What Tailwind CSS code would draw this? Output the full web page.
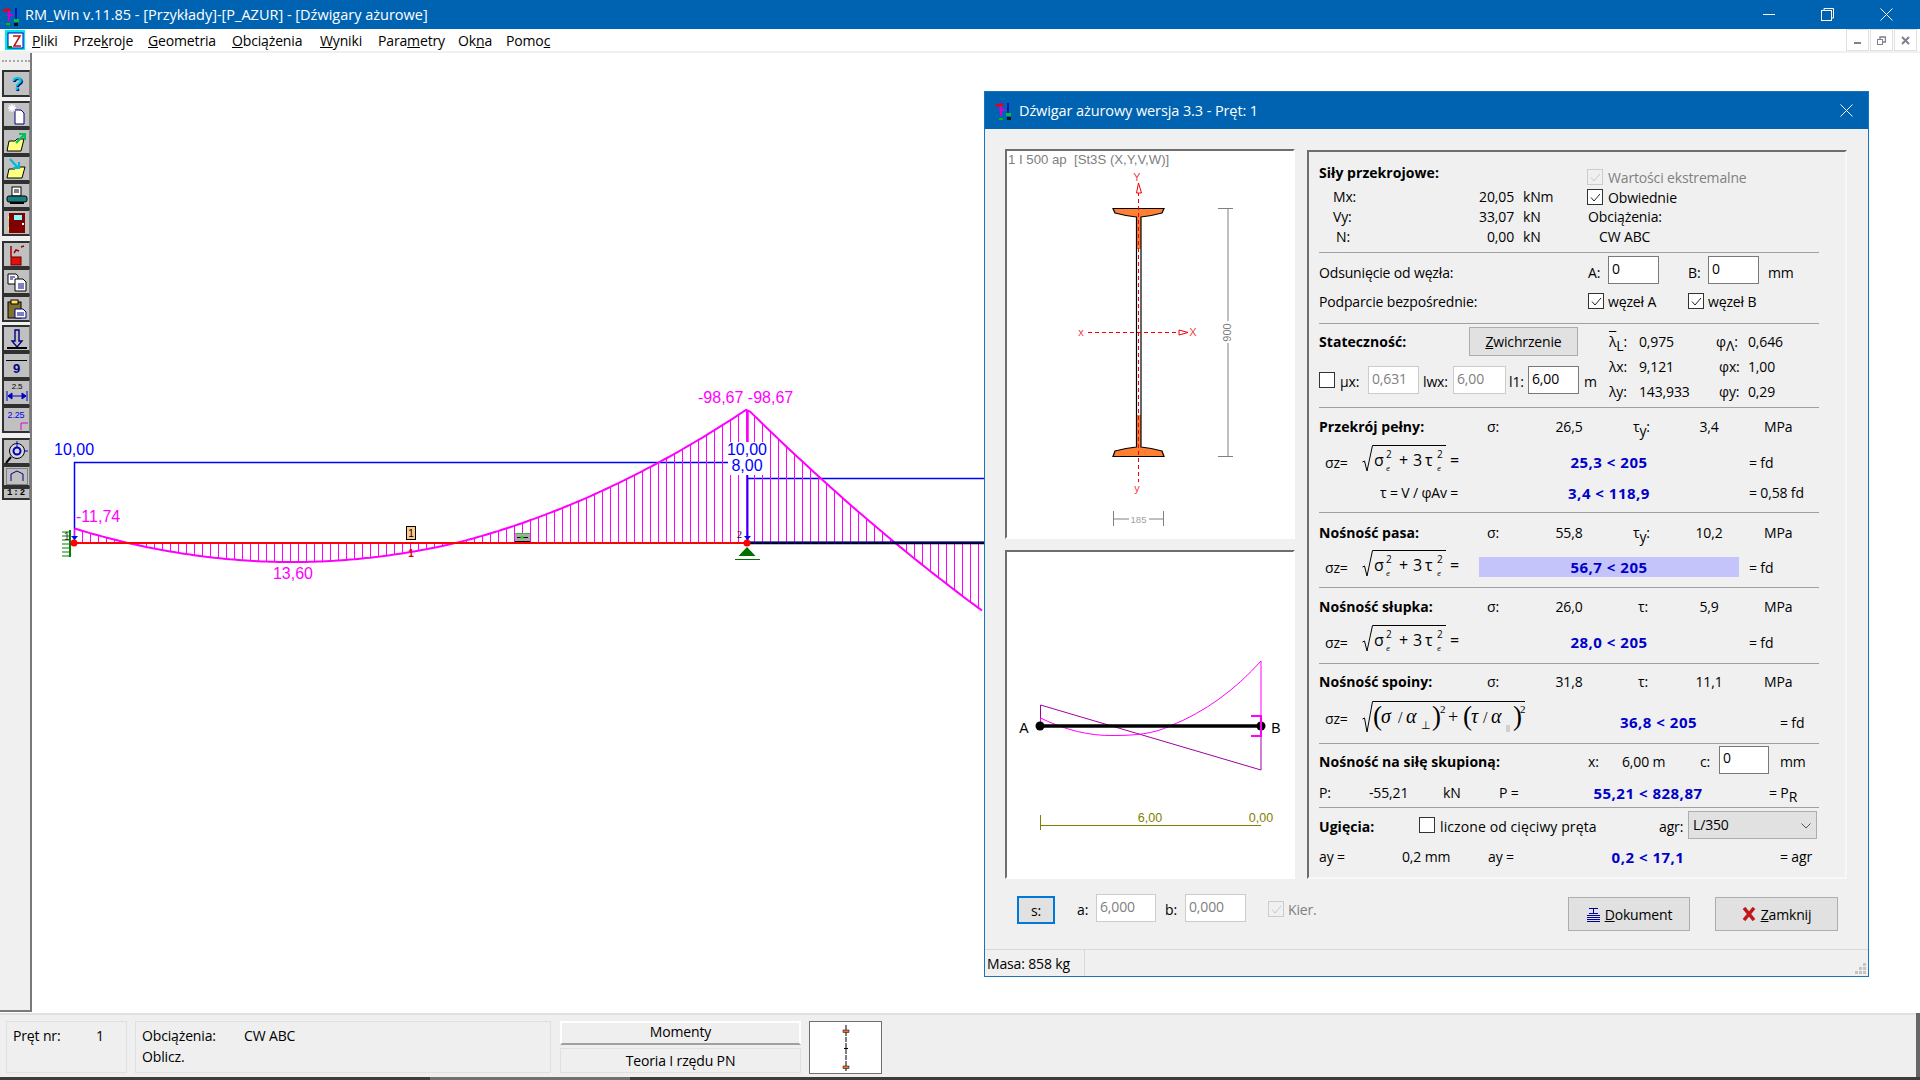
<!DOCTYPE html>
<html lang="pl">
<head>
    <meta charset="UTF-8">
    <title>RM_Win v.11.85</title>
    <script src="https://cdn.jsdelivr.net/npm/@tailwindcss/browser@4"></script>
</head>
<body class="w-[1920px] h-[1080px] overflow-hidden flex flex-col bg-white text-black text-[14px] tracking-[-0.15px] font-['Open_Sans',sans-serif]">

    <!-- title bar -->
    <div class="h-[29px] bg-[#0063b1] text-white flex items-center">
        <svg class="ml-[1px] w-[22px] h-[24px]" viewBox="0 0 22 24" fill="none"><path d="M0 7l8-2 2 3-6 1z" fill="#e00020"/><path d="M8 8v10M6 12h6" stroke="#d000d0" stroke-width="2"/><path d="M15 5v13" stroke="#0000c0" stroke-width="1.5"/><rect x="13" y="16" width="5" height="3" fill="#00c040"/><rect x="13" y="20" width="4" height="3" fill="#111"/><path d="M5 21h4" stroke="#00c000" stroke-width="2"/></svg>
        <span class="ml-[2px] text-[14.5px] tracking-normal">RM_Win v.11.85 - [Przykłady]-[P_AZUR] - [Dźwigary ażurowe]</span>
        <div class="ml-auto flex items-center">
            <div class="w-[12px] h-px bg-white"></div>
            <svg class="ml-[46px] w-[13px] h-[13px]" viewBox="0 0 13 13" fill="none" stroke="white"><rect x="0.5" y="2.5" width="10" height="10"/><path d="M3 2.5V0.5H12.5V10H10.5"/></svg>
            <svg class="ml-[46px] mr-[27px] w-[13px] h-[13px]" viewBox="0 0 13 13" stroke="white"><path d="M0.5 0.5l12 12M12.5 0.5l-12 12"/></svg>
        </div>
    </div>

    <!-- menu -->
    <div class="h-[24px] flex items-center border-b-2 border-[#f0f0f0]">
        <svg class="ml-[5px] w-[20px] h-[20px]" viewBox="0 0 20 20" fill="none"><rect width="20" height="20" fill="#00e8e8"/><rect x="3" y="3" width="15" height="15" fill="white" stroke="#0000c0"/><path d="M8 6h7l-6 10h7" stroke="#c01010" stroke-width="1.5"/><path d="M3 17h4" stroke="#008000" stroke-width="2"/></svg>
        <div class="ml-[7px] pt-px flex">
            <span class="w-[41px]"><u>P</u>liki</span>
            <span class="w-[75px]">Prze<u>k</u>roje</span>
            <span class="w-[84px]"><u>G</u>eometria</span>
            <span class="w-[88px]"><u>O</u>bciążenia</span>
            <span class="w-[58px]"><u>W</u>yniki</span>
            <span class="w-[80px]">Para<u>m</u>etry</span>
            <span class="w-[48px]">Ok<u>n</u>a</span>
            <span>Pomo<u>c</u></span>
        </div>
        <div class="ml-auto mr-[3px] flex gap-px">
            <div class="w-[23px] h-[22px] border border-[#e0e0e0] flex items-end justify-center pb-[6px]"><div class="w-[7px] h-[2px] bg-[#80808f]"></div></div>
            <div class="w-[23px] h-[22px] border border-[#e0e0e0] flex items-center justify-center"><svg class="w-[9px] h-[9px]" viewBox="0 0 9 9" fill="none" stroke="#80808f"><rect x="0.5" y="3.5" width="5" height="5"/><path d="M3 3V1h5.5v5H6" stroke-width="1.4"/></svg></div>
            <div class="w-[23px] h-[22px] border border-[#e0e0e0] flex items-center justify-center"><svg class="w-[9px] h-[9px]" viewBox="0 0 9 9" stroke="#80808f" stroke-width="2"><path d="M1 1l7 7M8 1l-7 7"/></svg></div>
        </div>
    </div>

    <!-- workspace -->
    <div class="h-[960px] flex">
        <!-- left toolbar -->
        <div class="w-[32px] h-[959px] bg-[#f0f0f0] border-r-2 border-b-2 border-[#7a7a7a] flex flex-col pl-[2px]">
            <div class="mt-[7px] mb-[8px] w-[28px] h-[2px] border-t-2 border-dotted border-[#a8a8a8]"></div>
            <div class="w-[28px] h-[27px] border-2 border-r border-[#303030] border-r-[#808080] bg-[#c0c0c0] flex items-center justify-center"><svg class="w-[20px] h-[20px]" viewBox="0 0 20 20"><text x="11" y="17" text-anchor="middle" font-family="Liberation Sans" font-weight="700" font-size="19" fill="#000080">?</text><text x="10" y="16" text-anchor="middle" font-family="Liberation Sans" font-weight="700" font-size="19" fill="#00c8d8">?</text></svg></div>
            <div class="mt-[4px] w-[28px] h-[27px] border-2 border-r border-[#303030] border-r-[#808080] bg-[#c0c0c0] flex items-center justify-center"><svg class="w-[22px] h-[22px]" viewBox="0 0 22 22"><path d="M9 6h6l3 3v11H9z" fill="white" stroke="#000080"/><path d="M2 4h8M6 0v8M3 1l6 6M9 1L3 7" stroke="white" stroke-width="1.3"/></svg></div>
            <div class="w-[28px] h-[27px] border-2 border-r border-[#303030] border-r-[#808080] bg-[#c0c0c0] flex items-center justify-center"><svg class="w-[22px] h-[22px]" viewBox="0 0 22 22"><path d="M3 10h6l2-2h7l-3 12H1z" fill="#ffff80" stroke="#000"/><path d="M10 12l9-9M13 3h6v6" stroke="#00c060" stroke-width="2.2" fill="none"/></svg></div>
            <div class="w-[28px] h-[27px] border-2 border-r border-[#303030] border-r-[#808080] bg-[#c0c0c0] flex items-center justify-center"><svg class="w-[22px] h-[22px]" viewBox="0 0 22 22"><path d="M3 11h6l2-2h8l-3 11H1z" fill="#ffff80" stroke="#000"/><path d="M4 1l8 9M7 10h6V4" stroke="#00b8d8" stroke-width="2.2" fill="none"/></svg></div>
            <div class="w-[28px] h-[27px] border-2 border-r border-[#303030] border-r-[#808080] bg-[#c0c0c0] flex items-center justify-center"><svg class="w-[22px] h-[22px]" viewBox="0 0 22 22"><rect x="6" y="2" width="9" height="9" fill="white" stroke="#000"/><path d="M8 5h5M8 7h5" stroke="#000"/><rect x="1" y="11" width="20" height="6" rx="2" fill="#1a8080" stroke="#000"/><rect x="4" y="17" width="14" height="2" fill="#000"/></svg></div>
            <div class="w-[28px] h-[27px] border-2 border-r border-[#303030] border-r-[#808080] bg-[#c0c0c0] flex items-center justify-center"><svg class="w-[20px] h-[22px]" viewBox="0 0 20 22"><rect x="2" y="1" width="16" height="20" fill="#800000"/><rect x="7" y="3" width="8" height="5" fill="#80ffff"/><rect x="1" y="4" width="1" height="3" fill="#ffff00"/><rect x="1" y="15" width="1" height="3" fill="#ffff00"/><rect x="15" y="11" width="2" height="2" fill="white"/></svg></div>
            <div class="mt-[5px] w-[28px] h-[27px] border-2 border-r border-[#303030] border-r-[#808080] bg-[#c0c0c0] flex items-center justify-center"><svg class="w-[22px] h-[22px]" viewBox="0 0 22 22"><rect x="5" y="13" width="10" height="8" fill="#e01010" stroke="#600"/><path d="M5 2v11M8 9l2-3 3 1M15 3l3-1" stroke="#a00000" stroke-width="1.5" fill="none"/></svg></div>
            <div class="w-[28px] h-[27px] border-2 border-r border-[#303030] border-r-[#808080] bg-[#c0c0c0] flex items-center justify-center"><svg class="w-[20px] h-[20px]" viewBox="0 0 20 20" fill="white" stroke="#000"><path d="M1 2h8l2 2v8H1z"/><path d="M8 7h8l3 3v9H8z"/><path d="M3 5h5M3 7h3M11 12h6M11 14h6M11 16h6" stroke="#000080"/></svg></div>
            <div class="w-[28px] h-[27px] border-2 border-r border-[#303030] border-r-[#808080] bg-[#c0c0c0] flex items-center justify-center"><svg class="w-[22px] h-[22px]" viewBox="0 0 22 22"><rect x="2" y="4" width="13" height="16" fill="#807030" stroke="#000"/><rect x="5" y="2" width="7" height="4" fill="#ffe060" stroke="#000"/><path d="M9 11h8l3 3v6H9z" fill="white" stroke="#000080"/><path d="M11 15h7M11 17h7" stroke="#000080"/></svg></div>
            <div class="mt-[3px] w-[28px] h-[27px] border-2 border-r border-[#303030] border-r-[#808080] bg-[#c0c0c0] flex items-center justify-center"><svg class="w-[22px] h-[22px]" viewBox="0 0 22 22" fill="none"><path d="M9 2h4v11h3l-5 6-5-6h3z" stroke="#000080" stroke-width="1.4"/><path d="M1 20h20" stroke="#000" stroke-width="2"/></svg></div>
            <div class="w-[28px] h-[27px] border-2 border-r border-[#303030] border-r-[#808080] bg-[#c0c0c0] flex flex-col items-center justify-start"><div class="mt-[6px] w-[21px] h-[2px] bg-black"></div><span class="text-[13px] leading-[16px] font-bold text-[#000080] font-['Liberation_Sans',sans-serif]">9</span></div>
            <div class="w-[28px] h-[27px] border-2 border-r border-[#303030] border-r-[#808080] bg-[#c0c0c0] flex items-center justify-center"><svg class="w-[24px] h-[23px]" viewBox="0 0 24 23"><text x="12" y="8" text-anchor="middle" font-family="Liberation Sans" font-size="8" fill="#000">2.5</text><path d="M2 10v10M22 10v10M3 15h18M3 15l4-3v6zM21 15l-4-3v6z" stroke="#0000c0" fill="#0000c0"/></svg></div>
            <div class="w-[28px] h-[27px] border-2 border-r border-[#303030] border-r-[#808080] bg-[#c0c0c0] flex items-center justify-center"><svg class="w-[24px] h-[23px]" viewBox="0 0 24 23" fill="none"><text x="11" y="10" text-anchor="middle" font-family="Liberation Sans" font-size="9" fill="#0000f0">2.25</text><path d="M23 15h-7v7" stroke="#e000e0"/></svg></div>
            <div class="mt-[5px] w-[28px] h-[27px] border-2 border-r border-[#303030] border-r-[#808080] bg-[#c0c0c0] flex items-center justify-center"><svg class="w-[24px] h-[24px]" viewBox="0 0 24 24" fill="none"><circle cx="12" cy="11" r="7.5" fill="#d8d8d8" stroke="#000"/><circle cx="12" cy="11" r="3.5" stroke="#0000c0" stroke-width="2"/><path d="M12 1v6M19 11h4" stroke="#0000c0"/><path d="M6 17l-5 6" stroke="#000" stroke-width="2"/></svg></div>
            <div class="w-[28px] h-[22px] border-2 border-r border-[#303030] border-r-[#808080] bg-[#c0c0c0] flex items-center justify-center"><svg class="w-[22px] h-[17px]" viewBox="0 0 22 17" fill="none"><rect x="0.5" y="0.5" width="21" height="16" stroke="#808080"/><path d="M5 13V6l6-3 6 3v7" stroke="#000080"/></svg></div>
            <div class="w-[28px] h-[13px] border-2 border-r border-[#303030] border-r-[#808080] bg-[#c0c0c0] flex items-center justify-center text-[9px] tracking-[1px] leading-none font-bold font-['Liberation_Mono',monospace]">1:2</div>
        </div>

        <!-- drawing canvas with the floating dialog on top -->
        <div class="relative flex-1">
            <svg id="chart" class="absolute inset-0" width="1888" height="960" viewBox="32 53 1888 960" fill="none" font-family="Liberation Sans" font-size="16" letter-spacing="0">
                <path d="M74.5 542V462.5H730" stroke="#0000ff" stroke-width="1.5"/>
                <path d="M747.5 542V478.5H984" stroke="#0000ff" stroke-width="1.5"/>
                <g id="hatch" stroke="#ff00ff" stroke-width="1"></g>
                <path d="M747.5 410V446" stroke="#ff00ff" stroke-width="2.5"/>
                <path id="curve" stroke="#ff00ff" stroke-width="2"/>
                <path d="M74 543H747" stroke="#ff0000" stroke-width="2"/>
                <path d="M747 543H984" stroke="#000000" stroke-width="2.5"/>
                <path d="M747 542H984" stroke="#0000e0" stroke-width="1.2"/>
                <rect x="728" y="442" width="39" height="33" fill="white"/>
                <path d="M747.5 475V542" stroke="#0000ff" stroke-width="1.5"/>
                <text x="54" y="455" fill="#0000ff">10,00</text>
                <text x="76" y="522" fill="#ff00ff">-11,74</text>
                <text x="293" y="579" fill="#ff00ff" text-anchor="middle">13,60</text>
                <text x="698" y="403" fill="#ff00ff">-98,67 -98,67</text>
                <text x="747" y="455" fill="#0000ff" text-anchor="middle">10,00</text>
                <text x="747" y="471" fill="#0000ff" text-anchor="middle">8,00</text>
                <!-- supports and node marks -->
                <path d="M70 530V557" stroke="#008000" stroke-width="2"/>
                <path d="M62 532h8M62 536h8M62 540h8M62 544h8M62 548h8M62 552h8M62 556h8" stroke="#008000"/>
                <text x="64" y="540" fill="#303030" font-size="10">1</text>
                <circle cx="74" cy="543" r="3.5" fill="#ff0000"/>
                <path d="M71 536h7l-3.5 4z" fill="#0000ff"/>
                <path d="M744 536h7l-3.5 4z" fill="#0000ff"/>
                <text x="737" y="538" fill="#000" font-size="10" font-family="Liberation Serif">2</text>
                <circle cx="747" cy="543" r="3.5" fill="#ff0000"/>
                <path d="M747 547l8.5 9h-17z" fill="#007000"/>
                <path d="M735 559.5h25" stroke="#007000"/>
                <rect x="406.5" y="526.5" width="9" height="13" fill="#ffc98c" stroke="#000"/>
                <text x="411" y="537" fill="#000" font-size="10" text-anchor="middle">1</text>
                <text x="411" y="557" fill="#e00000" font-size="10" font-weight="700" text-anchor="middle">1</text>
                <rect x="515" y="534" width="15" height="8" fill="#a8a8a8"/>
                <path d="M515 533.5h15" stroke="#30c030"/>
                <path d="M515 541.5h15M517 537.5h11" stroke="#000"/>
                <rect x="520.5" y="536" width="3" height="3" fill="#20e020"/>
            </svg>

            <!-- dialog -->
            <div class="absolute left-[952px] top-[38px] w-[885px] h-[886px] border border-[#1a74bb] bg-[#f0f0f0] flex flex-col">
                <div class="h-[37px] bg-[#0063b1] text-white flex items-center">
                    <svg class="ml-[8px] w-[22px] h-[22px]" viewBox="0 0 22 22" fill="none"><path d="M1 5l8-2 2 3-6 1z" fill="#e00020"/><path d="M8 6v10M6 10h6" stroke="#d000d0" stroke-width="2"/><path d="M15 3v12" stroke="#0000c0" stroke-width="1.5"/><rect x="13" y="13" width="5" height="3" fill="#00c040"/><rect x="14" y="17" width="4" height="3" fill="#111"/><path d="M6 19h4" stroke="#00c000" stroke-width="2"/></svg>
                    <span class="ml-[4px] text-[14.5px] tracking-[-0.1px]">Dźwigar ażurowy wersja 3.3 - Pręt: 1</span>
                    <svg class="ml-auto mr-[15px] w-[13px] h-[13px]" viewBox="0 0 13 13" stroke="white"><path d="M0.5 0.5l12 12M12.5 0.5l-12 12"/></svg>
                </div>

                <div class="h-[750px] flex pl-[20px] pt-[20px]">
                    <!-- preview panels -->
                    <div class="w-[290px] flex flex-col gap-[11px]">
                        <div class="h-[390px] bg-white border-2 border-[#6e6e6e] border-r-white border-b-white">
                            <svg width="286" height="386" viewBox="2 2 286 386" fill="none" font-family="Liberation Sans" letter-spacing="0">
                                <text x="3" y="15" font-size="13.2" fill="#808080" xml:space="preserve">1 I 500 ap  [St3S (X,Y,V,W)]</text>
                                <path d="M108 59.5H159L157 64Q146 67 136 68V298Q146 299 157 302L159 307.5H108L110 302Q121 299 131.5 298V68Q121 67 110 64Z" fill="#ff7f33"/>
                                <rect x="132" y="100" width="4" height="166" fill="white"/>
                                <path d="M108 59.5H159L157 64Q146 67 136 68V298Q146 299 157 302L159 307.5H108L110 302Q121 299 131.5 298V68Q121 67 110 64Z" stroke="#000" stroke-width="1.2"/>
                                <path d="M133.5 36V333M83 183.5H183" stroke="#f00000" stroke-dasharray="4 3"/>
                                <path d="M133.5 34l-2 10h5z" stroke="#f00000" fill="white"/>
                                <path d="M174 181v5l9-2.5z" stroke="#f00000" fill="white"/>
                                <text x="132" y="32" font-size="11" fill="#f04040" text-anchor="middle">Y</text>
                                <text x="132" y="343" font-size="11" fill="#f04040" text-anchor="middle">y</text>
                                <text x="76" y="187" font-size="11" fill="#f04040" text-anchor="middle">x</text>
                                <text x="188" y="187" font-size="11" fill="#f04040" text-anchor="middle">X</text>
                                <path d="M213 59.5H228M223 59.5V307.5M213 307.5H228" stroke="#808080"/>
                                <rect x="216" y="172" width="12" height="22" fill="white"/>
                                <text transform="translate(226 183.5) rotate(-90)" font-size="11" fill="#808080" text-anchor="middle">900</text>
                                <path d="M108.5 362V377M158.5 362V377M108.5 370H124M144 370H158.5" stroke="#808080"/>
                                <text x="133.5" y="374" font-size="9.5" fill="#a0a0a0" text-anchor="middle">185</text>
                            </svg>
                        </div>
                        <div class="h-[329px] bg-white border-2 border-[#6e6e6e] border-r-white border-b-white">
                            <svg width="286" height="325" viewBox="2 2 286 325" fill="none" font-family="Liberation Sans" letter-spacing="0">
                                <path d="M35.5 176V155L256 220V176" stroke="#a000a0"/>
                                <path d="M35.5 176V168C60 180 85 186 108 185.5C130 185.5 148 184 165 176C200 162 230 140 256 111V176" stroke="#ff00ff"/>
                                <path d="M35 176H256" stroke="#000" stroke-width="3.5"/>
                                <circle cx="35" cy="176" r="4.5" fill="#000"/>
                                <circle cx="256" cy="176" r="4.5" fill="#000"/>
                                <path d="M246 166H256V186H246" stroke="#ff00ff" stroke-width="2"/>
                                <text x="19" y="183" font-size="14" fill="#000" text-anchor="middle">A</text>
                                <text x="271" y="183" font-size="14" fill="#000" text-anchor="middle">B</text>
                                <path d="M35.5 265V280M35 275.5H256" stroke="#808000"/>
                                <text x="145" y="272" font-size="12.5" fill="#808000" text-anchor="middle">6,00</text>
                                <text x="256" y="272" font-size="12.5" fill="#808000" text-anchor="middle">0,00</text>
                            </svg>
                        </div>
                    </div>

                    <!-- results group -->
                    <div class="ml-[12px] mt-px w-[540px] h-[729px] border-2 border-[#6e6e6e] border-r-[#f8f8f8] border-b-[#f8f8f8] pl-[10px]">
                        <div class="w-[500px]">
                            <!-- section forces -->
                            <div class="h-[101px] border-b border-[#a0a0a0] flex">
                                <div class="w-[268px] pt-[11px]">
                                    <div class="h-5 leading-5 font-bold tracking-[0.05px]">Siły przekrojowe:</div>
                                    <div class="mt-[4px] h-5 leading-5 flex"><span class="w-[120px] pl-[14px]">Mx:</span><span class="w-[75px] text-right">20,05</span><span class="ml-[9px]">kNm</span></div>
                                    <div class="h-5 leading-5 flex"><span class="w-[120px] pl-[14px]">Vy:</span><span class="w-[75px] text-right">33,07</span><span class="ml-[9px]">kN</span></div>
                                    <div class="h-5 leading-5 flex"><span class="w-[120px] pl-[17px]">N:</span><span class="w-[75px] text-right">0,00</span><span class="ml-[9px]">kN</span></div>
                                </div>
                                <div class="pt-[15px]">
                                    <div class="h-5 flex items-center text-[#808080]"><div class="w-4 h-4 border border-[#cccccc] bg-[#f0f0f0] flex items-center justify-center"><svg class="w-[11px] h-[9px]" viewBox="0 0 11 9" fill="none" stroke="#c8c8c8"><path d="M1 4.5L4 8L10 1"/></svg></div><span class="ml-[5px]">Wartości ekstremalne</span></div>
                                    <div class="h-5 flex items-center"><div class="w-4 h-4 border border-[#333333] bg-white flex items-center justify-center"><svg class="w-[11px] h-[9px]" viewBox="0 0 11 9" fill="none" stroke="#222"><path d="M1 4.5L4 8L10 1"/></svg></div><span class="ml-[5px]">Obwiednie</span></div>
                                    <div class="h-5 leading-5 pl-px">Obciążenia:</div>
                                    <div class="h-5 leading-5 pl-[12px]">CW ABC</div>
                                </div>
                            </div>
                            <!-- section offsets -->
                            <div class="h-[71px] border-b border-[#a0a0a0] pt-[3px]">
                                <div class="h-7 flex">
                                    <span class="w-[269px] pt-[6px]">Odsunięcie od węzła:</span>
                                    <span class="w-[20px] pt-[6px]">A:</span>
                                    <input value="0" class="w-[51px] h-7 border border-[#7a7a7a] bg-white pl-[3px] pb-[4px]">
                                    <span class="ml-[29px] w-[20px] pt-[6px]">B:</span>
                                    <input value="0" class="w-[51px] h-7 border border-[#7a7a7a] bg-white pl-[3px] pb-[4px]">
                                    <span class="ml-[9px] pt-[6px]">mm</span>
                                </div>
                                <div class="mt-[7px] h-5 flex items-center">
                                    <span class="w-[269px]">Podparcie bezpośrednie:</span>
                                    <div class="w-[100px] flex items-center"><div class="w-4 h-4 border border-[#333333] bg-white flex items-center justify-center"><svg class="w-[11px] h-[9px]" viewBox="0 0 11 9" fill="none" stroke="#222"><path d="M1 4.5L4 8L10 1"/></svg></div><span class="ml-[4px]">węzeł A</span></div>
                                    <div class="flex items-center"><div class="w-4 h-4 border border-[#333333] bg-white flex items-center justify-center"><svg class="w-[11px] h-[9px]" viewBox="0 0 11 9" fill="none" stroke="#222"><path d="M1 4.5L4 8L10 1"/></svg></div><span class="ml-[4px]">węzeł B</span></div>
                                </div>
                            </div>
                            <!-- section stability -->
                            <div class="h-[84px] border-b border-[#a0a0a0] flex">
                                <div class="w-[290px]">
                                    <div class="mt-[3px] h-[29px] flex items-center">
                                        <span class="w-[150px] font-bold tracking-[0.05px]">Stateczność:</span>
                                        <div class="w-[109px] h-[29px] border border-[#adadad] bg-[#e1e1e1] flex items-center justify-center"><span><u>Z</u>wichrzenie</span></div>
                                    </div>
                                    <div class="mt-[10px] h-7 flex items-center">
                                        <div class="w-4 h-4 border border-[#333333] bg-white"></div>
                                        <span class="ml-[5px] w-[28px] pt-[3px]">µx:</span>
                                        <input value="0,631" disabled class="w-[51px] h-7 border border-[#cccccc] bg-white pl-[3px] pb-[4px] text-[#808080]">
                                        <span class="ml-[4px] w-[30px] pt-[3px]">lwx:</span>
                                        <input value="6,00" disabled class="w-[53px] h-7 border border-[#cccccc] bg-white pl-[3px] pb-[4px] text-[#808080]">
                                        <span class="ml-[3px] w-[19px] pt-[3px]">l1:</span>
                                        <input value="6,00" class="w-[51px] h-7 border border-[#7a7a7a] bg-white pl-[3px] pb-[4px]">
                                        <span class="ml-[5px] pt-[3px]">m</span>
                                    </div>
                                </div>
                                <div class="pt-[8px]">
                                    <div class="h-5 leading-5 flex"><span class="w-[30px]"><span class="overline">λ</span><span class="relative top-[4px]">L</span>:</span><span class="w-[77px]">0,975</span><span class="w-[32px]">φ<span class="relative top-[4px]">Λ</span>:</span><span>0,646</span></div>
                                    <div class="mt-[5px] h-5 leading-5 flex"><span class="w-[30px]">λx:</span><span class="w-[77px]">9,121</span><span class="w-[32px] pl-[3px]">φx:</span><span>1,00</span></div>
                                    <div class="mt-[5px] h-5 leading-5 flex"><span class="w-[30px]">λy:</span><span class="w-[77px]">143,933</span><span class="w-[32px] pl-[3px]">φy:</span><span>0,29</span></div>
                                </div>
                            </div>
                            <!-- section full cross-section -->
                            <div class="h-[105px] border-b border-[#a0a0a0] pt-[9px]">
                                <div class="h-5 leading-5 flex"><span class="w-[168px] font-bold tracking-[0.05px]">Przekrój pełny:</span><span class="w-[60px]">σ:</span><span class="w-[44px] text-center">26,5</span><span class="w-[42px]"></span><span class="w-[40px]">τ<span class="relative top-[4px]">y</span>:</span><span class="w-[72px] text-center">3,4</span><span class="w-[19px]"></span><span>MPa</span></div>
                                <div class="mt-[8px] h-[34px] flex items-center">
                                    <span class="w-[43px] pl-[6px]">σz=</span>
                                    <svg width="117" height="34" viewBox="0 0 117 34" fill="none" font-family="Open Sans" font-size="16" letter-spacing="0">
                                        <path d="M0.5 17L2.5 16L5 26L10.5 0.5H84" stroke="#000"/>
                                        <text x="12" y="21" fill="#000">σ</text><text x="24" y="13" fill="#000" font-size="10">2</text><text x="24" y="26" fill="#000" font-size="8" font-style="italic">e</text>
                                        <text x="37" y="21" fill="#000">+</text><text x="51" y="21" fill="#000">3</text><text x="63" y="21" fill="#000">τ</text>
                                        <text x="75" y="13" fill="#000" font-size="10">2</text><text x="75" y="26" fill="#000" font-size="8" font-style="italic">e</text><text x="88" y="21" fill="#000">=</text>
                                    </svg>
                                    <span class="w-[260px] h-5 leading-5 text-center text-[15px] tracking-[0.5px] font-bold text-[#0000c8]">25,3 &lt; 205</span>
                                    <span class="ml-[10px]">= fd</span>
                                </div>
                                <div class="mt-[4px] h-5 leading-5 flex">
                                    <span class="w-[160px] pl-[61px]">τ = V / φAv =</span>
                                    <span class="w-[260px] text-center text-[15px] tracking-[0.5px] font-bold text-[#0000c8]">3,4 &lt; 118,9</span>
                                    <span class="ml-[10px]">= 0,58 fd</span>
                                </div>
                            </div>
                            <!-- section flange -->
                            <div class="h-[75px] border-b border-[#a0a0a0] pt-[10px]">
                                <div class="h-5 leading-5 flex"><span class="w-[168px] font-bold tracking-[0.05px]">Nośność pasa:</span><span class="w-[60px]">σ:</span><span class="w-[44px] text-center">55,8</span><span class="w-[42px]"></span><span class="w-[40px]">τ<span class="relative top-[4px]">y</span>:</span><span class="w-[72px] text-center">10,2</span><span class="w-[19px]"></span><span>MPa</span></div>
                                <div class="mt-[7px] h-[34px] flex items-center">
                                    <span class="w-[43px] pl-[6px]">σz=</span>
                                    <svg width="117" height="34" viewBox="0 0 117 34" fill="none" font-family="Open Sans" font-size="16" letter-spacing="0">
                                        <path d="M0.5 17L2.5 16L5 26L10.5 0.5H84" stroke="#000"/>
                                        <text x="12" y="21" fill="#000">σ</text><text x="24" y="13" fill="#000" font-size="10">2</text><text x="24" y="26" fill="#000" font-size="8" font-style="italic">e</text>
                                        <text x="37" y="21" fill="#000">+</text><text x="51" y="21" fill="#000">3</text><text x="63" y="21" fill="#000">τ</text>
                                        <text x="75" y="13" fill="#000" font-size="10">2</text><text x="75" y="26" fill="#000" font-size="8" font-style="italic">e</text><text x="88" y="21" fill="#000">=</text>
                                    </svg>
                                    <span class="w-[260px] h-5 leading-5 text-center text-[15px] tracking-[0.5px] font-bold text-[#0000c8] bg-[#c4c4fa]">56,7 &lt; 205</span>
                                    <span class="ml-[10px]">= fd</span>
                                </div>
                            </div>
                            <!-- section post -->
                            <div class="h-[76px] border-b border-[#a0a0a0] pt-[9px]">
                                <div class="h-5 leading-5 flex"><span class="w-[168px] font-bold tracking-[0.05px]">Nośność słupka:</span><span class="w-[60px]">σ:</span><span class="w-[44px] text-center">26,0</span><span class="w-[42px]"></span><span class="w-[40px] pl-[5px]">τ:</span><span class="w-[72px] text-center">5,9</span><span class="w-[19px]"></span><span>MPa</span></div>
                                <div class="mt-[8px] h-[34px] flex items-center">
                                    <span class="w-[43px] pl-[6px]">σz=</span>
                                    <svg width="117" height="34" viewBox="0 0 117 34" fill="none" font-family="Open Sans" font-size="16" letter-spacing="0">
                                        <path d="M0.5 17L2.5 16L5 26L10.5 0.5H84" stroke="#000"/>
                                        <text x="12" y="21" fill="#000">σ</text><text x="24" y="13" fill="#000" font-size="10">2</text><text x="24" y="26" fill="#000" font-size="8" font-style="italic">e</text>
                                        <text x="37" y="21" fill="#000">+</text><text x="51" y="21" fill="#000">3</text><text x="63" y="21" fill="#000">τ</text>
                                        <text x="75" y="13" fill="#000" font-size="10">2</text><text x="75" y="26" fill="#000" font-size="8" font-style="italic">e</text><text x="88" y="21" fill="#000">=</text>
                                    </svg>
                                    <span class="w-[260px] h-5 leading-5 text-center text-[15px] tracking-[0.5px] font-bold text-[#0000c8]">28,0 &lt; 205</span>
                                    <span class="ml-[10px]">= fd</span>
                                </div>
                            </div>
                            <!-- section weld -->
                            <div class="h-[80px] border-b border-[#a0a0a0] pt-[8px]">
                                <div class="h-5 leading-5 flex"><span class="w-[168px] font-bold tracking-[0.05px]">Nośność spoiny:</span><span class="w-[60px]">σ:</span><span class="w-[44px] text-center">31,8</span><span class="w-[42px]"></span><span class="w-[40px] pl-[5px]">τ:</span><span class="w-[72px] text-center">11,1</span><span class="w-[19px]"></span><span>MPa</span></div>
                                <div class="mt-[9px] h-[34px] flex items-center">
                                    <span class="w-[43px] pl-[6px]">σz=</span>
                                    <svg width="170" height="34" viewBox="0 0 170 34" fill="none" font-family="Liberation Serif" font-size="20" letter-spacing="0">
                                        <path d="M0.5 18L2.5 17L5 31L10.5 0.5H163" stroke="#000"/>
                                        <text x="11" y="24" fill="#000" font-size="27">(</text>
                                        <text x="19" y="22" fill="#000" font-style="italic">σ</text><text x="36" y="22" fill="#000" font-size="16">/</text><text x="44" y="22" fill="#000" font-style="italic">α</text>
                                        <text x="59" y="28" fill="#000" font-size="11">⊥</text><text x="70" y="24" fill="#000" font-size="27">)</text><text x="78" y="12" fill="#000" font-size="11">2</text>
                                        <text x="86" y="22" fill="#000" font-size="18">+</text><text x="101" y="24" fill="#000" font-size="27">(</text>
                                        <text x="109" y="22" fill="#000" font-style="italic">τ</text><text x="121" y="22" fill="#000" font-size="16">/</text><text x="129" y="22" fill="#000" font-style="italic">α</text>
                                        <path d="M145 24v7M147 24v7" stroke="#b0b0b0"/><text x="151" y="24" fill="#000" font-size="27">)</text><text x="158" y="12" fill="#000" font-size="11">2</text>
                                    </svg>
                                    <span class="ml-[39px] w-[175px] pt-[8px] text-center text-[15px] tracking-[0.5px] font-bold text-[#0000c8]">36,8 &lt; 205</span>
                                    <span class="ml-[34px] pt-[8px]">= fd</span>
                                </div>
                            </div>
                            <!-- section point load -->
                            <div class="h-[64px] border-b border-[#a0a0a0] pt-[2px]">
                                <div class="h-7 flex items-center">
                                    <span class="w-[269px] pt-[3px] font-bold tracking-[0.05px]">Nośność na siłę skupioną:</span>
                                    <span class="w-[34px] pt-[3px]">x:</span>
                                    <span class="w-[78px] pt-[3px]">6,00 m</span>
                                    <span class="w-[19px] pt-[3px]">c:</span>
                                    <input value="0" class="w-[50px] h-7 border border-[#7a7a7a] bg-white pl-[3px] pb-[5px]">
                                    <span class="ml-[11px] pt-[3px]">mm</span>
                                </div>
                                <div class="mt-[9px] h-5 leading-5 flex">
                                    <span class="w-[50px]">P:</span><span class="w-[74px]">-55,21</span><span class="w-[56px]">kN</span><span class="w-[89px]">P =</span>
                                    <span class="w-[120px] text-center text-[15px] tracking-[0.5px] font-bold text-[#0000c8] whitespace-nowrap">55,21 &lt; 828,87</span>
                                    <span class="ml-[61px]">= P<span class="relative top-[4px]">R</span></span>
                                </div>
                            </div>
                            <!-- section deflection -->
                            <div class="pt-[3px]">
                                <div class="h-7 flex items-center">
                                    <span class="w-[100px] pt-[2px] font-bold tracking-[0.05px]">Ugięcia:</span>
                                    <div class="w-4 h-4 border border-[#333333] bg-white"></div>
                                    <span class="ml-[5px] w-[219px] pt-[2px] tracking-[0.1px]">liczone od cięciwy pręta</span>
                                    <span class="w-[29px] pt-[2px]">agr:</span>
                                    <div class="w-[129px] h-7 border border-[#adadad] bg-[#e1e1e1] flex items-center pl-[4px] pb-[2px]">L/350<svg class="ml-auto mr-[5px] mt-[3px] w-[10px] h-[6px]" viewBox="0 0 10 6" fill="none" stroke="#555"><path d="M0.5 0.5L5 5L9.5 0.5"/></svg></div>
                                </div>
                                <div class="mt-[8px] h-5 leading-5 flex">
                                    <span class="w-[83px]">ay =</span><span class="w-[86px]">0,2 mm</span><span class="w-[100px]">ay =</span>
                                    <span class="w-[120px] text-center text-[15px] tracking-[0.5px] font-bold text-[#0000c8]">0,2 &lt; 17,1</span>
                                    <span class="ml-[72px]">= agr</span>
                                </div>
                            </div>
                        </div>
                    </div>
                </div>

                <!-- dialog buttons -->
                <div class="h-[70px] flex items-start pt-[15px]">
                    <div class="ml-[32px] mt-[2px] w-[38px] h-[28px] border-2 border-[#0078d7] bg-[#e1e1e1] flex items-center justify-center">s:</div>
                    <span class="ml-[22px] w-[19px] pt-[5px]">a:</span>
                    <input value="6,000" disabled class="w-[60px] h-7 border border-[#cccccc] bg-white pl-[3px] pb-[4px] text-[#808080]">
                    <span class="ml-[9px] w-[20px] pt-[5px]">b:</span>
                    <input value="0,000" disabled class="w-[61px] h-7 border border-[#cccccc] bg-white pl-[3px] pb-[4px] text-[#808080]">
                    <div class="ml-[22px] mt-[7px] w-4 h-4 border border-[#cccccc] flex items-center justify-center"><svg class="w-[11px] h-[9px]" viewBox="0 0 11 9" fill="none" stroke="#c8c8c8"><path d="M1 4.5L4 8L10 1"/></svg></div>
                    <span class="ml-[4px] w-[280px] pt-[5px] text-[#808080]">Kier.</span>
                    <div class="mt-[3px] w-[122px] h-[34px] border border-[#adadad] bg-[#e1e1e1] flex items-center justify-center gap-[4px]">
                        <svg class="w-[15px] h-[15px]" viewBox="0 0 15 15" fill="none" stroke="#0000a0"><path d="M3 1.5h9M7.500 1.500v5M3 6.500h9M1 8.500h13M1 10.500h13M1 12.500h13M1 14.500h13"/></svg>
                        <span><u>D</u>okument</span>
                    </div>
                    <div class="ml-[25px] mt-[3px] w-[123px] h-[34px] border border-[#adadad] bg-[#e1e1e1] flex items-center justify-center gap-[5px]">
                        <svg class="w-[14px] h-[14px]" viewBox="0 0 14 14" stroke="#c01818" stroke-width="3.5"><path d="M2 1l10 12M12 1L2 13"/></svg>
                        <span><u>Z</u>amknij</span>
                    </div>
                </div>

                <!-- dialog status -->
                <div class="h-[27px] border-t border-[#d8d8d8] flex items-center relative">
                    <div class="w-[100px] h-full pl-[2px] border-r border-[#d8d8d8] flex items-center">Masa: 858 kg</div>
                    <svg class="ml-auto mr-[2px] self-end mb-[2px] w-[11px] h-[11px]" viewBox="0 0 11 11" fill="#c4c4c4"><rect x="8" y="0" width="3" height="3"/><rect x="4" y="4" width="3" height="3"/><rect x="8" y="4" width="3" height="3"/><rect x="0" y="8" width="3" height="3"/><rect x="4" y="8" width="3" height="3"/><rect x="8" y="8" width="3" height="3"/></svg>
                </div>
            </div>
        </div>
    </div>

    <!-- status bar -->
    <div class="h-[64px] border-t-2 border-[#e0e0e0] bg-[#efefef] flex pt-[6px]">
        <div class="ml-[6px] w-[121px] h-[52px] border border-[#e0e0e0] pl-[6px] pt-[3px] flex"><span class="w-[83px]">Pręt nr:</span><span>1</span></div>
        <div class="ml-[8px] w-[416px] h-[52px] border border-[#e0e0e0] pl-[6px] pt-[3px]">
            <div class="flex h-5"><span class="w-[102px]">Obciążenia:</span><span>CW ABC</span></div>
            <div class="mt-px">Oblicz.</div>
        </div>
        <div class="ml-[9px] w-[241px] h-[52px] flex flex-col">
            <div class="h-[24px] border-2 border-t-white border-l-white border-r-white border-b-[#a0a0a0] flex items-center justify-center pb-[3px]">Momenty</div>
            <div class="mt-[3px] h-[25px] border border-[#e0e0e0] flex items-center justify-center">Teoria I rzędu PN</div>
        </div>
        <div class="ml-[8px] w-[73px] h-[53px] border border-[#707070] bg-white flex items-center justify-center">
            <svg width="12" height="46" viewBox="0 0 12 46" fill="none"><path d="M6 0V46" stroke="#000" stroke-dasharray="5 1"/><rect x="3" y="5" width="6" height="2.500" fill="#f07030" stroke="#000" stroke-width="0.500"/><rect x="3" y="41" width="6" height="2.500" fill="#f07030" stroke="#000" stroke-width="0.500"/><path d="M4 23.500h4" stroke="#000"/></svg>
        </div>
        <div class="ml-auto -mt-[8px] w-[4px] h-[64px] bg-[#666666]"></div>
    </div>
    <div class="h-[3px] bg-[#3c3c3c] flex"><div class="ml-[430px] w-[200px] bg-[#707070]"></div></div>

    <script>
        // bending moment line of the two spans, in page pixels
        function moment(x) {
            if (x <= 747.5) {
                var extra = x > 457 ? 6 * (x - 457) / 290 : 0;
                return 542.7 + 0.000709 * (x - 127) * (457 - x) - extra;
            }
            var t = x - 747.5;
            return 409 + 0.986 * t - 0.00054 * t * t;
        }
        var d = 'M74.5 ' + moment(74.5);
        for (var x = 78; x <= 984; x += 4) d += 'L' + x + ' ' + moment(x).toFixed(1);
        document.getElementById('curve').setAttribute('d', d);
        var h = '';
        for (var i = 74.5; i <= 984; i += 8) h += 'M' + i + ' 543V' + moment(i).toFixed(1);
        document.getElementById('hatch').innerHTML = '<path d="' + h + '"/>';
    </script>
</body>
</html>
